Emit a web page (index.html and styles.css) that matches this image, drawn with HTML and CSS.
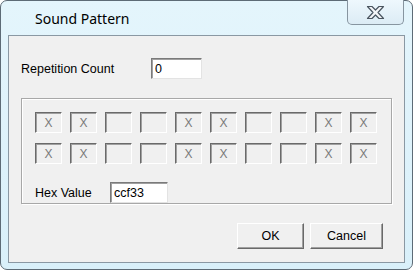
FILE: index.html
```html
<!DOCTYPE html>
<html lang="en">
<head>
    <meta charset="UTF-8">
    <title>Sound Pattern</title>
    <link rel="stylesheet" href="styles.css">
</head>
<body>
    <div class="window">
        <div class="titlebar">
            <span class="title">Sound Pattern</span>
            <button class="close" aria-label="Close">
                <svg width="19" height="15" viewBox="0 0 19 15">
                    <path d="M1.5 1.5 H6 L9.5 5 L13 1.5 H17.5 L12 7.5 L17.5 13.5 H13 L9.5 10 L6 13.5 H1.5 L7 7.5 Z"
                          fill="#f4f6f8" stroke="#4a5560" stroke-width="1.2" stroke-linejoin="round"/>
                </svg>
            </button>
        </div>
        <div class="client">
            <div class="field-row">
                <label class="label-rep" for="rep">Repetition Count</label>
                <input id="rep" class="edit edit-rep" type="text" value="0">
            </div>
            <div class="group">
                <div class="bits">
                    <span class="bit">X</span><span class="bit">X</span><span class="bit"></span><span class="bit"></span><span class="bit">X</span>
                    <span class="bit">X</span><span class="bit"></span><span class="bit"></span><span class="bit">X</span><span class="bit">X</span>
                    <span class="bit">X</span><span class="bit">X</span><span class="bit"></span><span class="bit"></span><span class="bit">X</span>
                    <span class="bit">X</span><span class="bit"></span><span class="bit"></span><span class="bit">X</span><span class="bit">X</span>
                </div>
                <div class="field-row hex-row">
                    <label class="label-hex" for="hex">Hex Value</label>
                    <input id="hex" class="edit edit-hex" type="text" value="ccf33">
                </div>
            </div>
            <div class="buttons">
                <button class="btn btn-ok">OK</button>
                <button class="btn btn-cancel">Cancel</button>
            </div>
        </div>
    </div>
</body>
</html>
```

FILE: styles.css
```css
body {
    margin: 0;
    padding: 0;
    background: #ffffff;
    font-family: "Liberation Sans", Arial, sans-serif;
    font-size: 12.5px;
    color: #000;
}
.window {
    box-sizing: border-box;
    width: 413px;
    height: 270px;
    padding: 0 7px 6px 7px;
    border: 1px solid #5d6b76;
    border-radius: 7px;
    background: linear-gradient(#e4f5fc, #d9f0fa);
    display: flex;
    flex-direction: column;
}
.titlebar {
    height: 34px;
    display: flex;
    justify-content: space-between;
    align-items: flex-start;
}
.title {
    font-family: "Noto Sans", sans-serif;
    font-size: 14px;
    margin: 8px 0 0 27px;
}
.close {
    box-sizing: border-box;
    width: 57px;
    height: 25px;
    margin: -1px 1px 0 0;
    padding: 0;
    border: 1px solid #8795a0;
    border-top: none;
    border-radius: 0 0 5px 5px;
    background: linear-gradient(#eef8fd, #dcecf5);
    display: flex;
    align-items: center;
    justify-content: center;
}
.client {
    box-sizing: border-box;
    flex: 1;
    border: 1px solid #8a98a3;
    background: #f0f0f0;
    padding: 22px 0 0 12px;
}
.field-row {
    display: flex;
    align-items: center;
}
.label-rep {
    width: 130px;
}
.edit {
    box-sizing: border-box;
    height: 21px;
    margin: 0;
    padding: 0 0 0 3px;
    border: 1px solid;
    border-color: #7a7a7a #e3e3e3 #e3e3e3 #7a7a7a;
    box-shadow: inset 1px 1px 0 #a0a0a0;
    background: #fff;
    font-family: "Liberation Sans", Arial, sans-serif;
    font-size: 12.5px;
    color: #000;
}
.edit-rep {
    width: 51px;
}
.edit-hex {
    width: 58px;
}
.group {
    box-sizing: border-box;
    width: 371px;
    height: 106px;
    margin-top: 19px;
    border: 1px solid #a8a8a8;
    box-shadow: 1px 1px 0 #fff, inset 1px 1px 0 #fff;
    padding: 13px 0 0 13px;
}
.bits {
    display: grid;
    grid-template-columns: repeat(10, 27px);
    grid-auto-rows: 21px;
    column-gap: 8px;
    row-gap: 10px;
}
.bit {
    box-sizing: border-box;
    border: 1px solid;
    border-color: #6a6a6a #ffffff #ffffff #6a6a6a;
    box-shadow: inset 1px 1px 0 #a0a0a0;
    background: #f0f0f0;
    color: #7a7a7a;
    font-size: 12px;
    display: flex;
    align-items: center;
    justify-content: center;
}
.hex-row {
    margin-top: 18px;
}
.label-hex {
    width: 75px;
}
.buttons {
    display: flex;
    justify-content: flex-end;
    gap: 6px;
    margin: 19px 21px 0 0;
}
.btn {
    box-sizing: border-box;
    height: 26px;
    padding: 0;
    border: 1px solid;
    border-color: #ffffff #696969 #696969 #ffffff;
    box-shadow: inset -1px -1px 0 #a0a0a0;
    background: #f0f0f0;
    font-family: "Liberation Sans", Arial, sans-serif;
    font-size: 12.5px;
    color: #000;
}
.btn-ok {
    width: 67px;
}
.btn-cancel {
    width: 73px;
}
```
